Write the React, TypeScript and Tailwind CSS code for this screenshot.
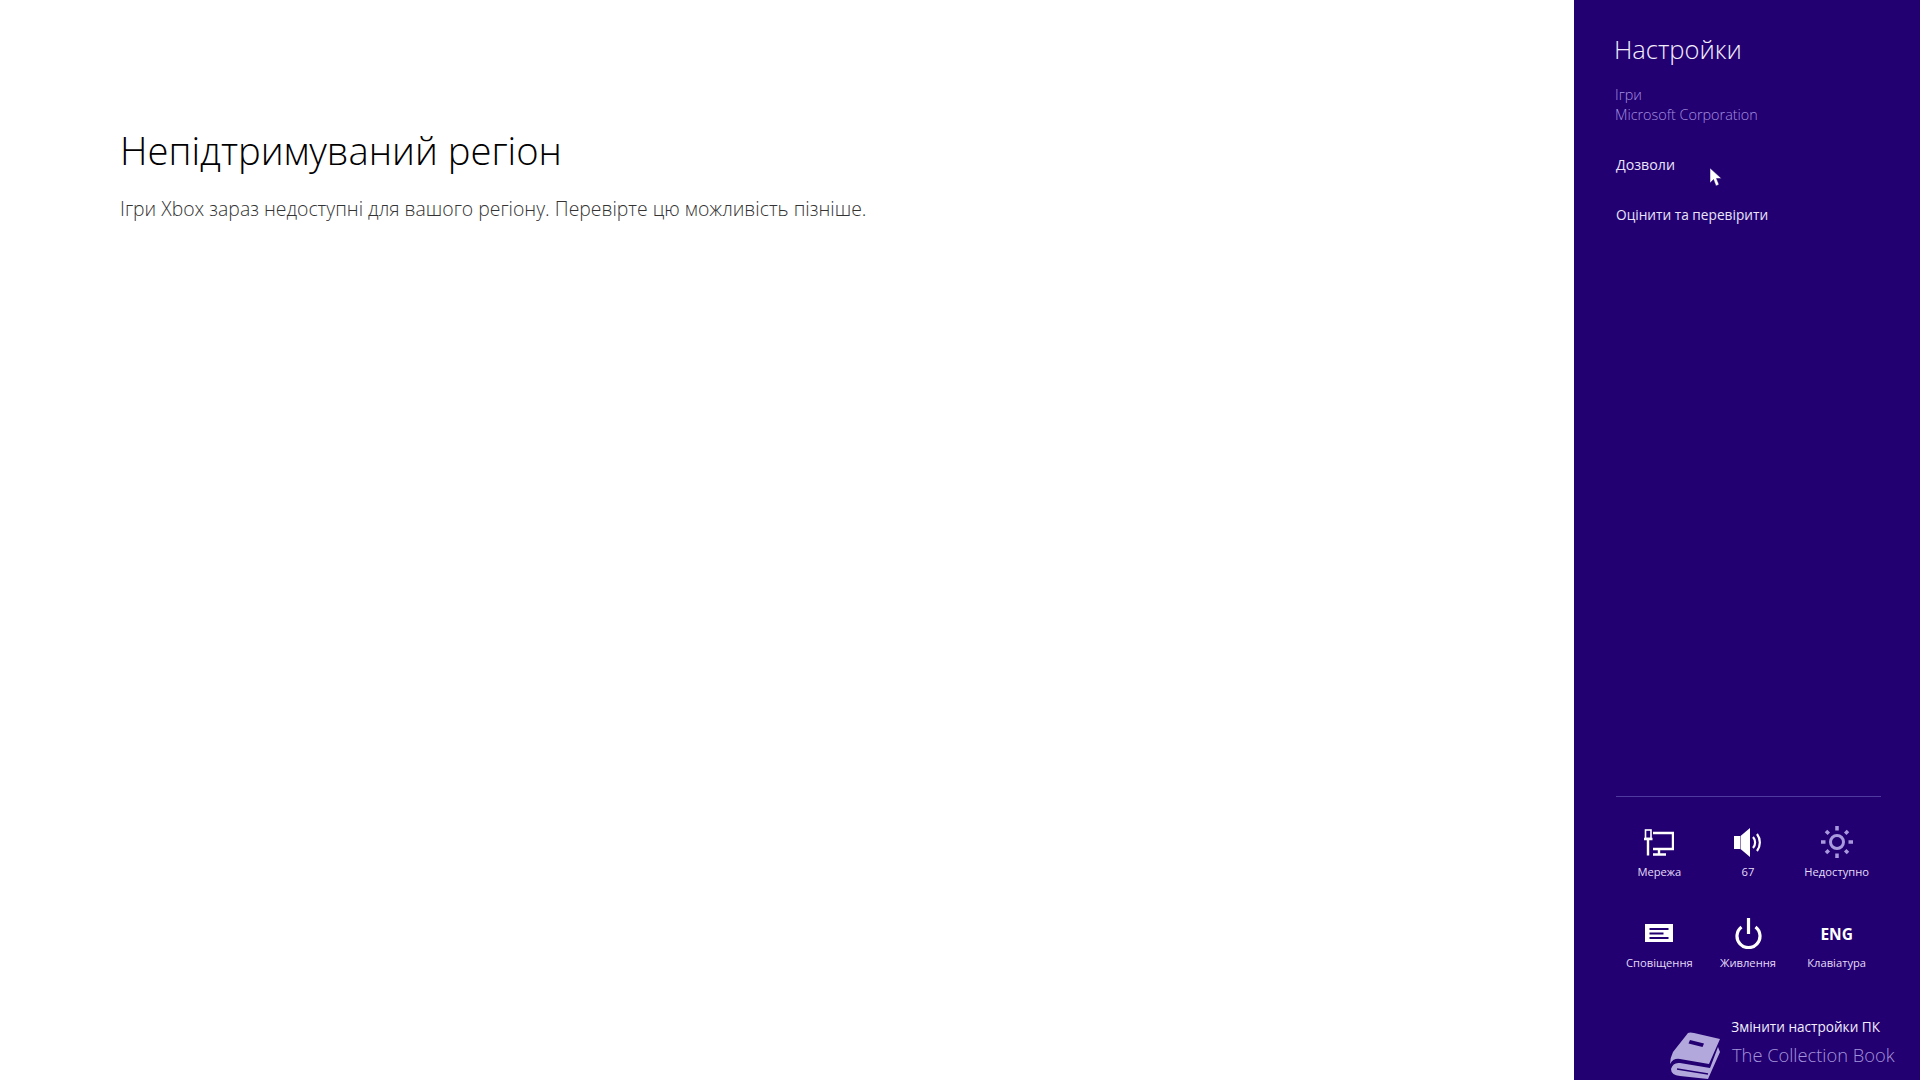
import React from "react";

const font = { fontFamily: '"Open Sans", "Noto Sans", sans-serif' };

function Tile({ icon, label }: { icon: React.ReactNode; label: string }) {
  return (
    <div className="flex w-[89px] flex-col items-center">
      <div className="flex h-[40px] w-full items-center justify-center">{icon}</div>
      <div className="mt-[1px] text-center text-[11.2px] leading-[18px] text-[#e4dcf8] whitespace-nowrap">{label}</div>
    </div>
  );
}

const NetworkIcon = (
  <svg width="30" height="27" viewBox="0 0 30 27" fill="none" stroke="white" strokeWidth="2.400">
    <rect x="1.500" y="1" width="5.500" height="8.500" strokeWidth="1.600" />
    <path d="M0 10h8.500M4 10v16.500" strokeWidth="2.400" />
    <path d="M9 4h20v16H9M15 20v5M9 25.500h13" />
  </svg>
);

const SpeakerIcon = (
  <svg width="28" height="29" viewBox="0 0 28 29" fill="white">
    <rect x="0" y="8" width="6" height="13" />
    <path d="M6.500 8 16 0v29l-9.500-8z" />
    <path d="M19 9c2.800 3 2.800 8 0 11" fill="none" stroke="white" strokeWidth="2.200" />
    <path d="M23 6c3.800 5 3.800 12 0 17" fill="none" stroke="white" strokeWidth="2.200" />
  </svg>
);

const SunIcon = (
  <svg width="34" height="34" viewBox="0 0 34 34" fill="none" stroke="#a999dd">
    <circle cx="17" cy="17" r="6.500" strokeWidth="3" />
    <path
      d="M17 1v4.500M17 28.500V33M1 17h4.500M28.500 17H33M6 6l2.800 2.800M25.200 25.200 28 28M6 28l2.800-2.800M25.200 8.800 28 6"
      strokeWidth="3.500"
    />
  </svg>
);

const NotifyIcon = (
  <svg width="28" height="18" viewBox="0 0 28 18">
    <rect width="28" height="18" fill="white" />
    <path d="M4.500 5h19M4.500 9.500h14M4.500 14h19" stroke="#220071" strokeWidth="1.800" />
  </svg>
);

const PowerIcon = (
  <svg width="27" height="31" viewBox="0 0 27 31" fill="none" stroke="white" strokeWidth="3.200">
    <path d="M13.500 0v16" />
    <path d="M6.500 9a11.500 11.500 0 1 0 14 0" />
  </svg>
);

const BookIcon = (
  <svg width="50" height="47" viewBox="0 0 50 47" fill="#b3a8dc">
    <path d="M18 1Q20 0 24 1L50 7 39 32 10 27Q3 26 0 32 0 26 3 20Z" />
    <path d="M1 37Q3 30 10 31L40 36 48 15 50 20 38 47 10 44Q1 43 1 37Z" />
    <path d="M20 8l14 3.500-1.500 3.500-14-3.500z" fill="#220071" />
    <path d="M7 37l31 5" fill="none" stroke="#220071" strokeWidth="1.500" />
  </svg>
);

const Cursor = (
  <svg width="13" height="20" viewBox="0 0 13 20" fill="white" stroke="#220071" strokeWidth="0.500">
    <path d="M1 0v15l3.500-3.500L7 18l3-1.500-2.500-6H12.500z" />
  </svg>
);

export default function App() {
  return (
    <div className="relative flex h-[1080px] w-[1920px] overflow-hidden bg-white" style={font}>
      <main className="flex-1 pl-[120px] pt-[125px]">
        <h1 className="text-[38.200px] font-light leading-[50px] text-black">Непідтримуваний регіон</h1>
        <p className="mt-[21px] text-[19.400px] font-light leading-[26px] text-[#333]">
          Ігри Xbox зараз недоступні для вашого регіону. Перевірте цю можливість пізніше.
        </p>
      </main>

      <aside className="relative flex w-[346px] flex-col bg-[#220071] pl-[41px] pr-[39px] text-white">
        <h2 className="-ml-[1px] mt-[31px] text-[25.500px] font-light leading-[36px] text-[#f2eefc]">Настройки</h2>
        <div className="mt-[18px] text-[14.400px] font-light leading-[20px] text-[#a48fe0]">
          <div>Ігри</div>
          <div>Microsoft Corporation</div>
        </div>
        <div className="ml-[1px] mt-[30px] text-[14.200px] leading-[20px] text-[#e9e4f8]">Дозволи</div>
        <div className="ml-[1px] mt-[30px] text-[13.700px] leading-[20px] text-[#e9e4f8]">Оцінити та перевірити</div>

        <div className="ml-[1px] mt-auto border-t border-[#4f3aa0] pt-[25px]">
          <div className="-ml-[1px] flex">
            <Tile icon={NetworkIcon} label="Мережа" />
            <Tile icon={SpeakerIcon} label="67" />
            <Tile icon={SunIcon} label="Недоступно" />
          </div>
          <div className="-ml-[1px] mt-[32px] flex">
            <Tile icon={NotifyIcon} label="Сповіщення" />
            <Tile icon={PowerIcon} label="Живлення" />
            <Tile icon={<span className="pt-[4px] text-[15.500px] font-bold text-white">ENG</span>} label="Клавіатура" />
          </div>
          <div className="mt-[45px] h-[63px] pr-[1px] text-right text-[13.600px] leading-[20px] text-[#f2eefc]">
            Змінити настройки ПК
          </div>
        </div>

        <div className="absolute left-[158px] top-[1043px] text-[18.300px] font-light leading-[24px] text-[#a493dc] whitespace-nowrap">
          The Collection Book
        </div>
        <div className="absolute left-[96px] top-[1032px]">{BookIcon}</div>
        <div className="absolute left-[135px] top-[168px]">{Cursor}</div>
      </aside>
    </div>
  );
}
